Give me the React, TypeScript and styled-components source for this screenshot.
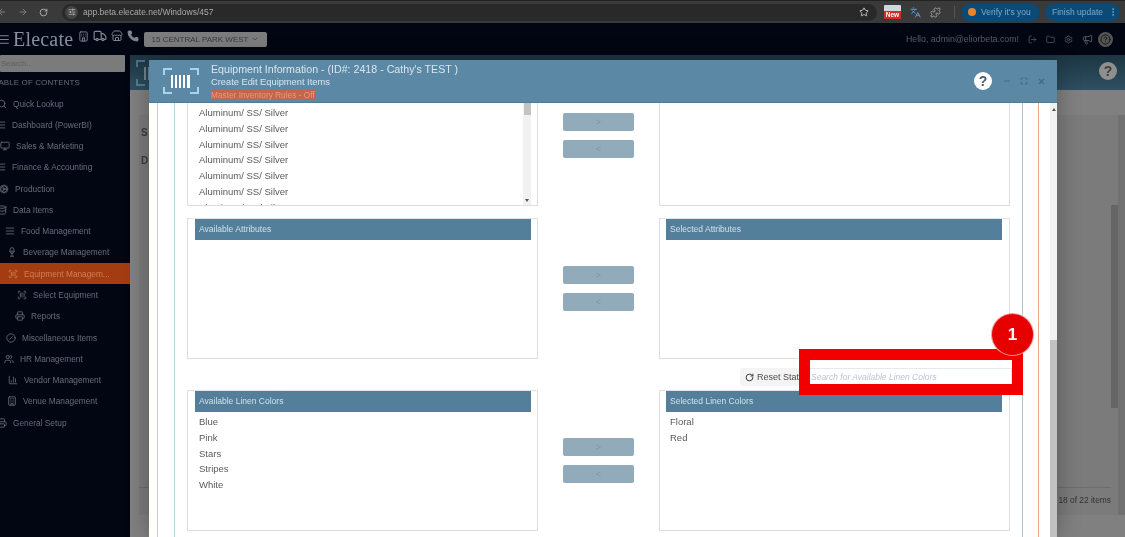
import React from "react";
import styled, { createGlobalStyle } from "styled-components";
import {
  AlignJustify, ArrowLeft, ArrowRight, Building, ChartColumn, ChevronDown, CircleHelp, CircleSlash, Cog, Database,
  EllipsisVertical, Folder, Hotel, Languages, LogOut, Maximize, Megaphone, Minus, Monitor, Phone, Printer, Puzzle, RotateCw,
  ScanBarcode, Search, Settings, SlidersHorizontal, Star, Store, Truck, Users, Wine, X,
} from "lucide-react";

const Global = createGlobalStyle`
  html, body { margin: 0; padding: 0; background: #020613; }
  * { box-sizing: border-box; }
`;

const Page = styled.div`
  position: relative;
  width: 1125px;
  height: 537px;
  overflow: hidden;
  display: flex;
  flex-direction: column;
  font-family: "Liberation Sans", Arial, sans-serif;
  filter: blur(0.7px);
`;

/* browser chrome */
const Chrome = styled.div`
  height: 23px;
  flex: none;
  background: #3a3a3a;
  border-top: 1px solid #222;
  display: flex;
  align-items: center;
  color: #b9b9b9;
`;
const NavGroup = styled.div`
  display: flex;
  align-items: center;
  gap: 11px;
  width: 60px;
  margin-left: -3px;
  color: #8c8c8c;
`;
const UrlPill = styled.div`
  flex: none;
  width: 815px;
  height: 17px;
  margin-left: 8px;
  border-radius: 9px;
  background: #292929;
  display: flex;
  align-items: center;
  padding: 0 8px 0 3px;
  font-size: 8.5px;
  color: #a9a9a9;
`;
const UrlIcon = styled.span`
  width: 13px;
  height: 13px;
  border-radius: 50%;
  background: #444;
  display: inline-flex;
  align-items: center;
  justify-content: center;
  margin-right: 5px;
  color: #ccc;
`;
const UrlText = styled.span`
  flex: 1;
`;
const Extensions = styled.div`
  display: flex;
  align-items: center;
  gap: 9px;
  margin-left: 7px;
  width: 70px;
  flex: none;
`;
const NewBadge = styled.span`
  width: 17px;
  height: 14px;
  display: flex;
  align-items: flex-end;
  justify-content: center;
  background: linear-gradient(#cfd7dc 0 45%, #d62b1f 45%);
  font-size: 6.5px;
  font-weight: 700;
  line-height: 8px;
  color: #fff;
  border-radius: 1px;
`;
const ExtSquare = styled.span`
  color: #5d9bdc;
  display: inline-flex;
`;
const ChromeSep = styled.span`
  width: 1px;
  height: 12px;
  background: #555;
  margin-right: 6px;
  flex: none;
`;
const ChromePill = styled.div<{ $w: number }>`
  width: ${(p) => p.$w}px;
  height: 17px;
  flex: none;
  margin-right: 5px;
  border-radius: 9px;
  background: #0c4a76;
  color: #79aacb;
  font-size: 8.5px;
  display: flex;
  align-items: center;
  gap: 5px;
  padding-left: 7px;
`;
const OrangeDot = styled.span`
  width: 8px;
  height: 8px;
  border-radius: 50%;
  background: #e8842c;
`;

/* app header */
const Header = styled.div`
  height: 32px;
  flex: none;
  background: #020613;
  display: flex;
  align-items: center;
  color: #6e7682;
`;
const Burger = styled.span`
  display: inline-flex;
  margin-left: -3px;
  color: #7b8591;
`;
const Logo = styled.span`
  font-family: "Liberation Serif", serif;
  font-size: 20px;
  color: #84909e;
  margin-left: 3px;
  letter-spacing: 0.2px;
  width: 65px;
`;
const HeaderIcons = styled.div`
  display: flex;
  align-items: center;
  gap: 4px;
  width: 66px;
  color: #7d8692;
  margin-top: -6px;
`;
const VenueSelect = styled.div`
  width: 123px;
  height: 15px;
  background: #7c7c7c;
  border-radius: 2px;
  display: flex;
  align-items: center;
  justify-content: center;
  gap: 3px;
  font-size: 8px;
  color: #333a44;
`;
const HeaderRight = styled.div`
  margin-left: auto;
  display: flex;
  align-items: center;
  gap: 9px;
  padding-right: 12px;
  font-size: 8.8px;
  color: #565d68;
`;
const HelpRing = styled.span`
  width: 15px;
  height: 15px;
  margin-left: -4px;
  border-radius: 50%;
  background: #555;
  color: #111;
  display: inline-flex;
  align-items: center;
  justify-content: center;
`;

/* body */
const Body = styled.div`
  flex: 1;
  display: flex;
  min-height: 0;
`;
const Sidebar = styled.aside`
  width: 130px;
  flex: none;
  background: #020613;
  overflow: hidden;
`;
const SideSearch = styled.div`
  width: 125px;
  height: 17px;
  background: #7b7b7b;
  border-radius: 1px;
  font-size: 8px;
  color: #5f5f5f;
  padding: 4px 0 0 1px;
`;
const TocTitle = styled.div`
  margin: 6px 0 6px -6px;
  height: 9px;
  line-height: 9px;
  font-size: 8px;
  color: #666d78;
  white-space: nowrap;
  letter-spacing: 0.1px;
`;
const NavList = styled.nav`
  display: grid;
  grid-auto-rows: 21.27px;
`;
const NavRow = styled.div<{ $x: number; $active?: boolean }>`
  display: flex;
  align-items: center;
  gap: 6px;
  padding-left: ${(p) => Math.max(p.$x, 0)}px;
  background: ${(p) => (p.$active ? "#a33c10" : "transparent")};
  color: ${(p) => (p.$active ? "#cf7f5a" : "#666d7a")};
  font-size: 8.3px;
  white-space: nowrap;
  & > svg {
    flex: none;
    margin-left: ${(p) => Math.min(p.$x, 0)}px;
  }
`;
const Main = styled.main`
  flex: 1;
  min-width: 0;
  background: #808080;
  display: flex;
  flex-direction: column;
`;
const Band = styled.div`
  height: 35px;
  flex: none;
  background: linear-gradient(#1d3542, #2e5062);
  display: flex;
  align-items: center;
  justify-content: space-between;
  padding: 0 8px 0 6px;
  opacity: 1;
`;
const BandLogo = styled.span`
  display: inline-flex;
  opacity: 0.35;
`;
const BandHelp = styled.span`
  width: 18px;
  height: 18px;
  margin-top: -4px;
  border-radius: 50%;
  background: #8f8f8f;
  color: #3d3d3d;
  font-size: 14px;
  font-weight: 700;
  display: flex;
  align-items: center;
  justify-content: center;
`;
const Card = styled.section`
  margin: 25px 0 22px 9px;
  flex: 1;
  background: #7b7b7b;
  border-right: 7px solid #717171;
  display: flex;
  min-height: 0;
`;
const CardBody = styled.div`
  flex: 1;
  display: flex;
  flex-direction: column;
  font-size: 10px;
  font-weight: 700;
  color: #3c3c3c;
  padding: 12px 0 0 2px;
`;
const CardRow = styled.div`
  height: 28px;
`;
const CardFooter = styled.div`
  margin-top: auto;
  height: 28px;
  border-top: 1px solid #6d6d6d;
  margin-left: -2px;
  padding: 7px 0 0;
  text-align: right;
  font-weight: 400;
  font-size: 8.4px;
  color: #333;
`;
const CardScroll = styled.div`
  width: 7px;
  padding-top: 90px;
`;
const CardThumb = styled.div`
  height: 203px;
  background: #656565;
`;

/* modal window */
const Modal = styled.div`
  position: absolute;
  left: 149px;
  top: 60px;
  width: 908px;
  height: 477px;
  background: #fff;
  box-shadow: 0 0 22px rgba(0, 0, 0, 0.3);
  display: flex;
  flex-direction: column;
`;
const ModalHead = styled.header`
  height: 43px;
  flex: none;
  background: #5b89a5;
  border-bottom: 1px solid #527b94;
  display: flex;
  align-items: center;
  padding: 0 11px 0 14px;
  color: #dbe7ef;
`;
const TitleBlock = styled.div`
  margin-left: 12px;
  display: flex;
  flex-direction: column;
`;
const Title = styled.div`
  font-size: 10.65px;
  line-height: 13px;
  color: #d8e5ee;
`;
const Subtitle = styled.div`
  font-size: 9.3px;
  line-height: 12px;
  color: #d8e5ee;
`;
const Rules = styled.div`
  align-self: flex-start;
  margin-top: 2px;
  font-size: 8.3px;
  line-height: 10px;
  background: #c6644f;
  color: #e79a80;
`;
const ModalActions = styled.div`
  margin-left: auto;
  display: flex;
  align-items: center;
  gap: 9px;
  color: #3f6a85;
`;
const ModalHelp = styled.span`
  width: 18px;
  height: 18px;
  margin-right: 2px;
  border-radius: 50%;
  background: #fff;
  color: #4a5a66;
  font-size: 14px;
  font-weight: 700;
  display: flex;
  align-items: center;
  justify-content: center;
`;
const ModalBody = styled.div`
  flex: 1;
  min-height: 0;
  display: flex;
`;
const Content = styled.div`
  flex: 1;
  min-width: 0;
  padding: 0 11px 0 8px;
`;
const RedFrame = styled.div`
  height: 100%;
  border-left: 1px solid #f3bdb3;
  border-right: 1px solid #eda591;
  padding: 0 15px 0 16px;
`;
const BlueFrame = styled.div`
  height: 100%;
  border-left: 1px solid #b9d6df;
  border-right: 1px solid #b4c6d4;
  padding: 0 12px;
`;
const Stack = styled.div`
  width: 823px;
  display: flex;
  flex-direction: column;
`;
const Transfer = styled.div<{ $h: number; $mt: number }>`
  height: ${(p) => p.$h}px;
  margin-top: ${(p) => p.$mt}px;
  flex: none;
  display: grid;
  grid-template-columns: 351px 121px 351px;
`;
const Panel = styled.div<{ $open?: boolean; $right?: boolean }>`
  border: 1px solid #dedede;
  border-top: ${(p) => (p.$open ? "none" : "1px solid #e3e3e3")};
  padding: ${(p) => (p.$right ? "0 7px 0 6px" : "0 6px 0 7px")};
  overflow: hidden;
  display: flex;
  flex-direction: column;
`;
const PanelFill = styled.div`
  flex: 1;
  min-height: 0;
  display: flex;
`;
const PanelHead = styled.div`
  height: 21px;
  flex: none;
  background: #537f9b;
  color: #cfe1ec;
  font-size: 8.5px;
  line-height: 21px;
  padding-left: 4px;
`;
const List = styled.div<{ $mt: number }>`
  flex: 1;
  margin-top: ${(p) => p.$mt}px;
  padding-left: 4px;
  overflow: hidden;
`;
const Item = styled.div`
  height: 15.8px;
  line-height: 15.8px;
  font-size: 9.5px;
  color: #5a5a5a;
`;
const ListScroll = styled.div`
  width: 8px;
  background: #f1f1f1;
  display: flex;
  flex-direction: column;
  align-items: center;
`;
const ListThumb = styled.div`
  width: 7px;
  height: 12px;
  background: #c4c4c4;
`;
const ListArrow = styled.div`
  margin-top: auto;
  margin-bottom: 3px;
  border-left: 2px solid transparent;
  border-right: 2px solid transparent;
  border-top: 3px solid #555;
`;
const Arrows = styled.div<{ $pt: number }>`
  display: flex;
  flex-direction: column;
  align-items: center;
  gap: 9px;
  padding-top: ${(p) => p.$pt}px;
`;
const MoveBtn = styled.div`
  width: 71px;
  height: 18px;
  background: #91abbb;
  border-radius: 2px;
  color: #7b98ab;
  font-size: 9px;
  line-height: 18px;
  text-align: center;
`;
const Toolbar = styled.div`
  height: 18px;
  margin: 9px -2px 0 0;
  flex: none;
  display: flex;
  justify-content: flex-end;
`;
const ResetBtn = styled.div`
  width: 68px;
  background: #f4f4f4;
  border-radius: 3px;
  display: flex;
  align-items: center;
  gap: 3px;
  padding-left: 5px;
  font-size: 9px;
  color: #4c4c4c;
  white-space: nowrap;
  overflow: hidden;
`;
const SearchInput = styled.div`
  width: 204px;
  border: 1px solid #e4e9e9;
  padding-left: 2px;
  background: #fff;
  font-size: 8.5px;
  line-height: 16px;
  font-style: italic;
  color: #b9c4d6;
`;
const Scrollbar = styled.div`
  width: 7px;
  flex: none;
  background: #f1f1f1;
  padding-top: 237px;
  position: relative;
`;
const ScrollArrow = styled.div`
  position: absolute;
  top: 5px;
  left: 2px;
  border-left: 2px solid transparent;
  border-right: 2px solid transparent;
  border-bottom: 3px solid #555;
`;
const ScrollThumb = styled.div`
  height: 100%;
  background: #c1c1c1;
`;

/* annotation laid over the shot */
const Callout = styled.div`
  position: absolute;
  left: 799px;
  top: 349px;
  width: 224px;
  height: 46px;
  border: 11px solid #f20000;
`;
const Badge = styled.div`
  position: absolute;
  left: 992px;
  top: 314px;
  width: 41px;
  height: 41px;
  border-radius: 50%;
  background: #e60000;
  box-shadow: 0 0 0 1px #e9a0a0;
  color: #fff;
  font-size: 17px;
  font-weight: 700;
  display: flex;
  align-items: center;
  justify-content: center;
`;

const BarcodeLogo = () => (
  <svg width="36" height="28" viewBox="0 0 36 28" fill="none" style={{ flex: "none" }}>
    <g stroke="#a9d3ea" strokeWidth="2">
      <path d="M1 8V2h8M27 2h8v6M1 20v6h8M27 26h8v-6" />
    </g>
    <g fill="#fff">
      <rect x="8" y="8" width="2" height="13" />
      <rect x="12" y="8" width="2" height="13" />
      <rect x="16" y="8" width="2" height="13" />
      <rect x="20" y="8" width="2" height="13" />
      <rect x="24" y="8" width="3" height="13" />
    </g>
  </svg>
);

const navItems: { label: string; x: number; icon: any; active?: boolean }[] = [
  { label: "Quick Lookup", x: -3, icon: Search },
  { label: "Dashboard (PowerBI)", x: -4, icon: AlignJustify },
  { label: "Sales & Marketing", x: 0, icon: Monitor },
  { label: "Finance & Accounting", x: -4, icon: AlignJustify },
  { label: "Production", x: -1, icon: Cog },
  { label: "Data Items", x: -3, icon: Database },
  { label: "Food Management", x: 5, icon: AlignJustify },
  { label: "Beverage Management", x: 7, icon: Wine },
  { label: "Equipment Managem...", x: 8, icon: ScanBarcode, active: true },
  { label: "Select Equipment", x: 17, icon: ScanBarcode },
  { label: "Reports", x: 15, icon: Printer },
  { label: "Miscellaneous Items", x: 6, icon: CircleSlash },
  { label: "HR Management", x: 4, icon: Users },
  { label: "Vendor Management", x: 8, icon: ChartColumn },
  { label: "Venue Management", x: 7, icon: Building },
  { label: "General Setup", x: -3, icon: Printer },
];

const Aluminum = () => (
  <>
    {Array.from({ length: 7 }).map((_, i) => (
      <Item key={i}>Aluminum/ SS/ Silver</Item>
    ))}
  </>
);

const Move = () => (
  <>
    <MoveBtn>&gt;</MoveBtn>
    <MoveBtn>&lt;</MoveBtn>
  </>
);

export default function App() {
  return (
    <Page>
      <Global />
      <Chrome>
        <NavGroup>
          <ArrowLeft size={10} />
          <ArrowRight size={10} />
          <RotateCw size={9} color="#c9c9c9" />
        </NavGroup>
        <UrlPill>
          <UrlIcon><SlidersHorizontal size={8} /></UrlIcon>
          <UrlText>app.beta.elecate.net/Windows/457</UrlText>
          <Star size={10} color="#d5d5d5" />
        </UrlPill>
        <Extensions>
          <NewBadge>New</NewBadge>
          <ExtSquare><Languages size={11} /></ExtSquare>
          <Puzzle size={11} color="#a5a5a5" />
        </Extensions>
        <ChromeSep />
        <ChromePill $w={79}><OrangeDot />Verify it's you</ChromePill>
        <ChromePill $w={75}>Finish update <EllipsisVertical size={10} /></ChromePill>
      </Chrome>
      <Header>
        <Burger><AlignJustify size={13} /></Burger>
        <Logo>Elecate</Logo>
        <HeaderIcons>
          <Hotel size={11} />
          <Truck size={14} />
          <Store size={12} />
          <Phone size={12} fill="#7d8692" />
        </HeaderIcons>
        <VenueSelect>15 CENTRAL PARK WEST <ChevronDown size={8} /></VenueSelect>
        <HeaderRight>
          <span>Hello, admin@eliorbeta.com!</span>
          <LogOut size={9} />
          <Folder size={9} />
          <Settings size={9} />
          <Megaphone size={11} />
          <HelpRing><CircleHelp size={11} /></HelpRing>
        </HeaderRight>
      </Header>
      <Body>
        <Sidebar>
          <SideSearch>Search...</SideSearch>
          <TocTitle>TABLE OF CONTENTS</TocTitle>
          <NavList>
            {navItems.map((n) => (
              <NavRow key={n.label} $x={n.x} $active={n.active}>
                <n.icon size={10} />
                {n.label}
              </NavRow>
            ))}
          </NavList>
        </Sidebar>
        <Main>
          <Band>
            <BandLogo><BarcodeLogo /></BandLogo>
            <BandHelp>?</BandHelp>
          </Band>
          <Card>
            <CardBody>
              <CardRow>S</CardRow>
              <CardRow>D</CardRow>
              <CardFooter>18 of 22 items</CardFooter>
            </CardBody>
            <CardScroll><CardThumb /></CardScroll>
          </Card>
        </Main>
      </Body>
      <Modal>
        <ModalHead>
          <BarcodeLogo />
          <TitleBlock>
            <Title>Equipment Information - (ID#: 2418 - Cathy's TEST )</Title>
            <Subtitle>Create Edit Equipment Items</Subtitle>
            <Rules>Master Inventory Rules - Off</Rules>
          </TitleBlock>
          <ModalActions>
            <ModalHelp>?</ModalHelp>
            <Minus size={8} strokeWidth={3} />
            <Maximize size={8} strokeWidth={3} />
            <X size={9} strokeWidth={3} />
          </ModalActions>
        </ModalHead>
        <ModalBody>
          <Content>
            <RedFrame>
              <BlueFrame>
                <Stack>
                  <Transfer $h={103} $mt={0}>
                    <Panel $open>
                      <PanelFill>
                        <List $mt={2}><Aluminum /></List>
                        <ListScroll><ListThumb /><ListArrow /></ListScroll>
                      </PanelFill>
                    </Panel>
                    <Arrows $pt={10}><Move /></Arrows>
                    <Panel $open $right />
                  </Transfer>
                  <Transfer $h={141} $mt={12}>
                    <Panel><PanelHead>Available Attributes</PanelHead></Panel>
                    <Arrows $pt={48}><Move /></Arrows>
                    <Panel $right><PanelHead>Selected Attributes</PanelHead></Panel>
                  </Transfer>
                  <Toolbar>
                    <ResetBtn><RotateCw size={9} color="#333" strokeWidth={2.5} />Reset State</ResetBtn>
                    <SearchInput>Search for Available Linen Colors</SearchInput>
                  </Toolbar>
                  <Transfer $h={141} $mt={4}>
                    <Panel>
                      <PanelHead>Available Linen Colors</PanelHead>
                      <List $mt={2}>
                        <Item>Blue</Item>
                        <Item>Pink</Item>
                        <Item>Stars</Item>
                        <Item>Stripes</Item>
                        <Item>White</Item>
                      </List>
                    </Panel>
                    <Arrows $pt={48}><Move /></Arrows>
                    <Panel $right>
                      <PanelHead>Selected Linen Colors</PanelHead>
                      <List $mt={2}>
                        <Item>Floral</Item>
                        <Item>Red</Item>
                      </List>
                    </Panel>
                  </Transfer>
                </Stack>
              </BlueFrame>
            </RedFrame>
          </Content>
          <Scrollbar>
            <ScrollArrow />
            <ScrollThumb />
          </Scrollbar>
        </ModalBody>
      </Modal>
      <Callout />
      <Badge>1</Badge>
    </Page>
  );
}
